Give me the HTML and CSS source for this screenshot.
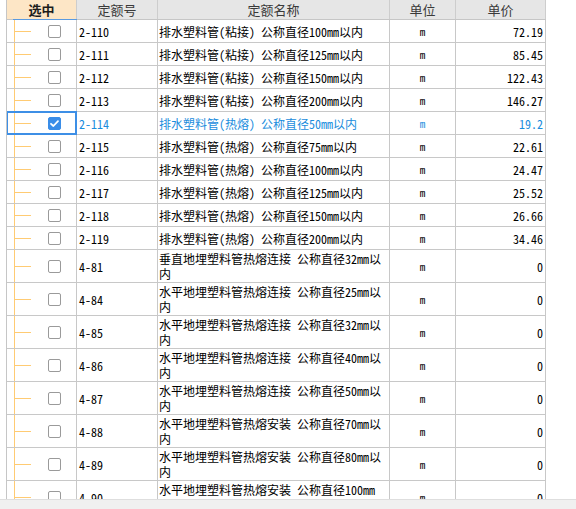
FILE: index.html
```html
<!DOCTYPE html>
<html lang="zh-CN">
<head>
<meta charset="utf-8">
<title>定额列表</title>
<link rel="stylesheet" href="styles.css">
</head>
<body>
<div class="grid">
  <div class="row hdr">
    <div class="c c1 hsel">选中</div>
    <div class="c c2 hc">定额号</div>
    <div class="c c3 hc">定额名称</div>
    <div class="c c4 hc">单位</div>
    <div class="c c5 hc">单价</div>
  </div>

  <div class="row"><div class="c c1"><span class="tree"></span><span class="cb"></span></div><div class="c c2">2-110</div><div class="c c3">排水塑料管(粘接) 公称直径100mm以内</div><div class="c c4">m</div><div class="c c5">72.19</div></div>
  <div class="row"><div class="c c1"><span class="tree"></span><span class="cb"></span></div><div class="c c2">2-111</div><div class="c c3">排水塑料管(粘接) 公称直径125mm以内</div><div class="c c4">m</div><div class="c c5">85.45</div></div>
  <div class="row"><div class="c c1"><span class="tree"></span><span class="cb"></span></div><div class="c c2">2-112</div><div class="c c3">排水塑料管(粘接) 公称直径150mm以内</div><div class="c c4">m</div><div class="c c5">122.43</div></div>
  <div class="row"><div class="c c1"><span class="tree"></span><span class="cb"></span></div><div class="c c2">2-113</div><div class="c c3">排水塑料管(粘接) 公称直径200mm以内</div><div class="c c4">m</div><div class="c c5">146.27</div></div>
  <div class="row sel"><div class="c c1"><span class="tree"></span><span class="cb on"><svg viewBox="0 0 13 13" width="13" height="13"><polyline points="3,6.8 5.4,9 10,4.2" fill="none" stroke="#fff" stroke-width="1.8" stroke-linecap="round" stroke-linejoin="round"/></svg></span></div><div class="c c2">2-114</div><div class="c c3">排水塑料管(热熔) 公称直径50mm以内</div><div class="c c4">m</div><div class="c c5">19.2</div></div>
  <div class="row"><div class="c c1"><span class="tree"></span><span class="cb"></span></div><div class="c c2">2-115</div><div class="c c3">排水塑料管(热熔) 公称直径75mm以内</div><div class="c c4">m</div><div class="c c5">22.61</div></div>
  <div class="row"><div class="c c1"><span class="tree"></span><span class="cb"></span></div><div class="c c2">2-116</div><div class="c c3">排水塑料管(热熔) 公称直径100mm以内</div><div class="c c4">m</div><div class="c c5">24.47</div></div>
  <div class="row"><div class="c c1"><span class="tree"></span><span class="cb"></span></div><div class="c c2">2-117</div><div class="c c3">排水塑料管(热熔) 公称直径125mm以内</div><div class="c c4">m</div><div class="c c5">25.52</div></div>
  <div class="row"><div class="c c1"><span class="tree"></span><span class="cb"></span></div><div class="c c2">2-118</div><div class="c c3">排水塑料管(热熔) 公称直径150mm以内</div><div class="c c4">m</div><div class="c c5">26.66</div></div>
  <div class="row"><div class="c c1"><span class="tree"></span><span class="cb"></span></div><div class="c c2">2-119</div><div class="c c3">排水塑料管(热熔) 公称直径200mm以内</div><div class="c c4">m</div><div class="c c5">34.46</div></div>

  <div class="row tall"><div class="c c1"><span class="tree"></span><span class="cb"></span></div><div class="c c2">4-81</div><div class="c c3">垂直地埋塑料管热熔连接 公称直径32mm以内</div><div class="c c4">m</div><div class="c c5">0</div></div>
  <div class="row tall"><div class="c c1"><span class="tree"></span><span class="cb"></span></div><div class="c c2">4-84</div><div class="c c3">水平地埋塑料管热熔连接 公称直径25mm以内</div><div class="c c4">m</div><div class="c c5">0</div></div>
  <div class="row tall"><div class="c c1"><span class="tree"></span><span class="cb"></span></div><div class="c c2">4-85</div><div class="c c3">水平地埋塑料管热熔连接 公称直径32mm以内</div><div class="c c4">m</div><div class="c c5">0</div></div>
  <div class="row tall"><div class="c c1"><span class="tree"></span><span class="cb"></span></div><div class="c c2">4-86</div><div class="c c3">水平地埋塑料管热熔连接 公称直径40mm以内</div><div class="c c4">m</div><div class="c c5">0</div></div>
  <div class="row tall"><div class="c c1"><span class="tree"></span><span class="cb"></span></div><div class="c c2">4-87</div><div class="c c3">水平地埋塑料管热熔连接 公称直径50mm以内</div><div class="c c4">m</div><div class="c c5">0</div></div>
  <div class="row tall"><div class="c c1"><span class="tree"></span><span class="cb"></span></div><div class="c c2">4-88</div><div class="c c3">水平地埋塑料管热熔安装 公称直径70mm以内</div><div class="c c4">m</div><div class="c c5">0</div></div>
  <div class="row tall"><div class="c c1"><span class="tree"></span><span class="cb"></span></div><div class="c c2">4-89</div><div class="c c3">水平地埋塑料管热熔安装 公称直径80mm以内</div><div class="c c4">m</div><div class="c c5">0</div></div>
  <div class="row tall"><div class="c c1"><span class="tree"></span><span class="cb"></span></div><div class="c c2">4-90</div><div class="c c3">水平地埋塑料管热熔安装 公称直径100mm以内</div><div class="c c4">m</div><div class="c c5">0</div></div>
</div>
<div class="hscroll"></div>
</body>
</html>
```
FILE: styles.css
```css
html, body {
  margin: 0;
  padding: 0;
  background: #ffffff;
}
body {
  width: 576px;
  height: 509px;
  overflow: hidden;
  font-family: "Noto Sans Mono CJK SC", "Liberation Mono", "Noto Sans CJK SC", monospace;
  font-size: 12px;
  color: #000;
}
.grid {
  margin-left: 6px;
  width: 539px;
  height: 499px;
  border-left: 1px solid #c6c6c6;
  overflow: hidden;
}
.row {
  display: flex;
  height: 22px;
  border-bottom: 1px solid #c8c8c8;
}
.row.tall {
  height: 32px;
}
.c {
  display: flex;
  align-items: center;
  box-sizing: border-box;
  border-right: 1px solid #c8c8c8;
  white-space: nowrap;
}
.c1 { width: 70px; position: relative; }
.c2 { width: 81px; padding-left: 2px; }
.c3 { width: 232px; padding: 0 5px 0 1px; white-space: normal; line-height: 15px; }
.c4 { width: 66px; justify-content: center; font-size: 11px; }
.c5 { width: 90px; justify-content: flex-end; padding-right: 2px; }

.hdr {
  height: 19px;
  background: #e6e6e6;
  border-bottom: 1px solid #c6c6c6;
}
.hdr .c {
  justify-content: center;
  font-family: "Noto Sans CJK SC", sans-serif;
  font-size: 13px;
  color: #3a3a3a;
  padding: 0;
  border-right-color: #cdcdcd;
}
.hdr .hsel {
  background: #fde6c6;
  font-weight: bold;
  color: #1c1c1c;
}
.hdr .hsel::after {
  content: "";
  position: absolute;
  left: 6px;
  right: -1px;
  bottom: -1px;
  height: 1px;
  background: #5a9ae0;
}

.tree {
  align-self: stretch;
  margin-left: 7px;
  width: 16px;
  border-left: 1px solid #ffcb73;
  position: relative;
}
.tree::after {
  content: "";
  position: absolute;
  left: 0;
  right: 0;
  top: 50%;
  height: 1px;
  background: #ffcb73;
}
.cb {
  margin-left: 17px;
  width: 13px;
  height: 13px;
  box-sizing: border-box;
  border: 1px solid #9a9a9a;
  border-radius: 2px;
  background: #fff;
  display: block;
}
.cb.on {
  background: #3a8de8;
  border-color: #3a8de8;
  position: relative;
}
.cb.on svg {
  position: absolute;
  left: -1px;
  top: -1px;
}

.sel .c {
  color: #1a8ddd;
}
.sel .c1::after {
  content: "";
  position: absolute;
  left: -1px;
  top: -1px;
  width: 71px;
  height: 24px;
  box-sizing: border-box;
  border: 2px solid #3d8fe6;
}

.hscroll {
  height: 9px;
  background: #f0f0f0;
  border-top: 1px solid #dedede;
}
```
